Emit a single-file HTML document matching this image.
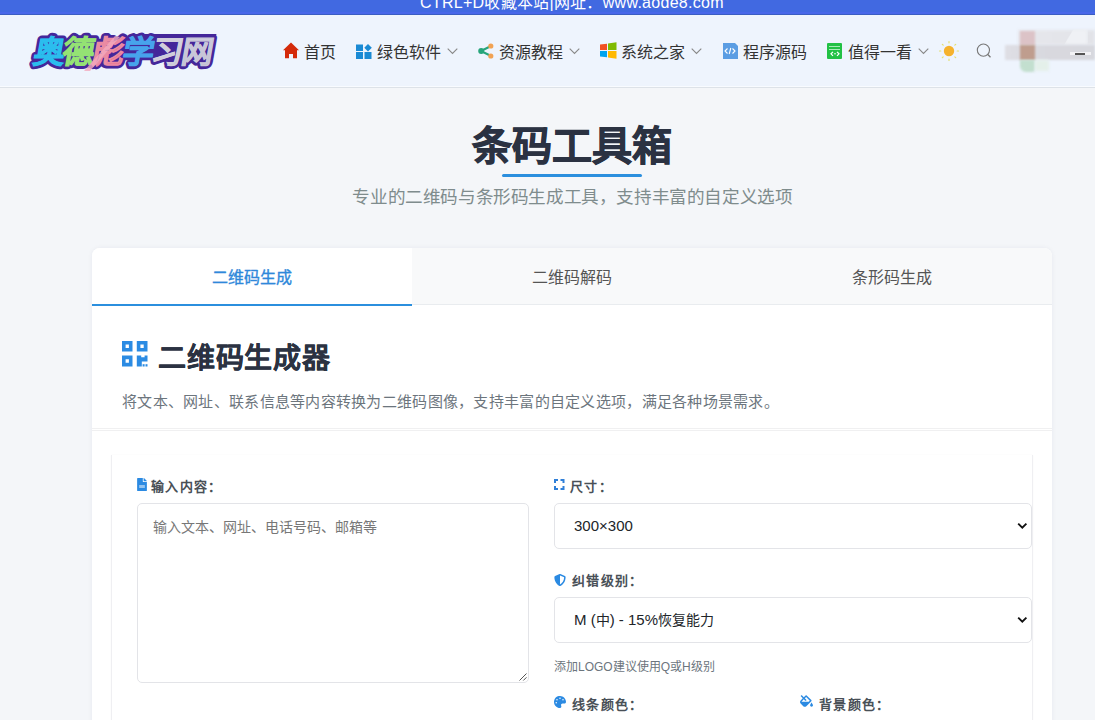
<!DOCTYPE html>
<html lang="zh-CN">
<head>
<meta charset="utf-8">
<title>条码工具箱</title>
<style>
*{margin:0;padding:0;box-sizing:border-box}
html,body{width:1095px;height:720px;overflow:hidden}
body{font-family:"Liberation Sans",sans-serif;background:#f4f6f9;position:relative;color:#333}
.abs{position:absolute}
#topbar{left:0;top:0;width:1095px;height:15px;background:linear-gradient(#4169e1 0,#4169e1 12px,#4867e9 12px,#4867e9 14px,#3a5dc2 14px);overflow:hidden}
#topbar span{position:absolute;left:420px;top:-7px;font-size:16px;letter-spacing:0.28px;color:#fff;white-space:nowrap;line-height:20px}
#header{left:0;top:15px;width:1095px;height:73px;background:#eef4fd;border-bottom:1px solid #dde2e8;box-shadow:inset 0 -1px 0 #f8fbff}
.nav{position:absolute;top:1px;height:73px;font-size:16px;color:#333;line-height:73px;white-space:nowrap}
.nav svg{position:absolute}
#title{left:0;width:1144px;top:120px;text-align:center;font-size:40px;font-weight:bold;color:#2b3242;line-height:52px;-webkit-text-stroke:0.9px #2b3242}
#uline{left:502px;top:174px;width:140px;height:3px;border-radius:2px;background:#2b8fde}
#sub{left:0;width:1145px;top:185px;text-align:center;font-size:17.6px;letter-spacing:-0.4px;color:#7f8c8d;line-height:24px}
#card{left:92px;top:248px;width:960px;height:480px;background:#fff;border-radius:8px 8px 0 0;box-shadow:0 0 5px rgba(30,40,80,.06)}
#tabs{left:0;top:0;width:960px;height:57px;background:#f8f9fa;border-bottom:1px solid #e9ecef;border-radius:8px 8px 0 0}
.tab{position:absolute;top:0;width:320px;height:57px;line-height:60px;text-align:center;font-size:16px;color:#555}
.tab.act{background:#fff;color:#2f88da;-webkit-text-stroke:0.35px #2f88da;border-bottom:2px solid #2b8fde;border-radius:8px 0 0 0;height:58px}

#sec{left:0;top:57px;width:960px;height:126px;border-bottom:3px double #f0f0f1}
#sech{left:66px;top:34px;letter-spacing:0.8px;font-size:28px;font-weight:bold;color:#2b3242;line-height:40px;-webkit-text-stroke:0.25px #2b3242;white-space:nowrap}
#secd{left:30px;top:85px;letter-spacing:0.28px;font-size:15px;color:#6c757d;line-height:24px;white-space:nowrap}
#panel{left:19px;top:207px;width:922px;height:300px;border-left:1px solid #efeff2;border-right:1px solid #efeff2;box-shadow:0 0 2px rgba(0,0,0,.03)}
.lbl{position:absolute;font-size:13px;letter-spacing:1.3px;font-weight:bold;color:#495057;line-height:20px;white-space:nowrap}
.lbl svg{position:absolute}
#ta{left:45px;top:255px;width:392px;height:180px;border:1px solid #e3e4e8;border-radius:5px;background:#fff}
#ph{left:61px;top:269px;font-size:14px;color:#777;line-height:20px;white-space:nowrap}
.sel{position:absolute;left:462px;width:478px;height:46px;border:1px solid #e3e4e8;border-radius:5px;background:#fff}
.sel span{position:absolute;left:19px;top:0px;line-height:44px;font-size:15px;color:#212529;white-space:nowrap}
.sel svg{position:absolute;left:462px;top:18px}
#hint{left:462px;top:410px;font-size:12px;color:#6c757d;line-height:18px;white-space:nowrap}
.sel i{font-style:normal;font-size:14px}
</style>
</head>
<body>
<div id="topbar" class="abs"><span>CTRL+D收藏本站|网址：www.aode8.com</span></div>
<div id="header" class="abs">
  <svg class="abs" style="left:20px;top:10px" width="205" height="60" viewBox="0 0 205 60">
    <defs>
      <linearGradient id="gd" x1="0" y1="0" x2="0" y2="1"><stop offset="0" stop-color="#86e060"/><stop offset="1" stop-color="#b5ec96"/></linearGradient>
      <linearGradient id="gb" x1="0" y1="0" x2="1" y2="0"><stop offset="0.45" stop-color="#eea2b4"/><stop offset="0.6" stop-color="#e24866"/></linearGradient>
      <linearGradient id="gs" x1="0" y1="0" x2="0" y2="1"><stop offset="0" stop-color="#e4e2ec"/><stop offset="1" stop-color="#b9b5c9"/></linearGradient>
      <linearGradient id="gs2" x1="0" y1="0" x2="0" y2="1"><stop offset="0" stop-color="#e0deea"/><stop offset="1" stop-color="#b4b0c6"/></linearGradient>
    </defs>
    <g font-family="Liberation Sans,sans-serif" font-weight="bold" font-size="31.5" transform="skewX(-10)">
      <path d="M112 9 L198 9 L198 35 L112 35 Z" fill="#43269a"/>
      <g fill="#45279a" stroke="#45279a" stroke-width="6.5" stroke-linejoin="round"><text x="18.5" y="38.5">奥</text><text x="48.1" y="38.5">德</text><text x="77.7" y="38.5">彪</text><text x="107.3" y="38.5">学</text><text x="136.9" y="38.5">习</text><text x="166.5" y="38.5">网</text></g>
      <g stroke-width="0.8" stroke-linejoin="miter"><text x="18.5" y="38.5" fill="#2bbdee" stroke="#2bbdee">奥</text><text x="48.1" y="38.5" fill="url(#gd)" stroke="#94e274">德</text><text x="77.7" y="38.5" fill="url(#gb)" stroke="#ea8aa2">彪</text><text x="107.3" y="38.5" fill="#47a3ec" stroke="#47a3ec">学</text><text x="136.9" y="38.5" fill="url(#gs)" stroke="#d0cedc">习</text><text x="166.5" y="38.5" fill="url(#gs2)" stroke="#c8c6d8">网</text></g>
    </g>
    <path d="M64 46 L95 11 L100 12 L70 46 Z" fill="#f2aabe" opacity="0.8"/>
  </svg>
  <!-- home -->
  <svg class="abs" style="left:283px;top:27px" width="16" height="17" viewBox="0 0 16 17"><path d="M8 0.5 L0 8.3 L2 8.3 L2 16.3 L6 16.3 L6 12 L10 12 L10 16.3 L14 16.3 L14 8.3 L16 8.3 Z" fill="#d42a0a"/></svg>
  <div class="nav" style="left:304px">首页</div>
  <!-- grid -->
  <svg class="abs" style="left:356px;top:29px" width="16" height="15" viewBox="0 0 16 15"><rect x="0" y="0.5" width="7" height="6.5" fill="#1a8ad4"/><rect x="0" y="8" width="7" height="7" fill="#1a8ad4"/><rect x="8.5" y="8" width="7" height="7" fill="#1a8ad4"/><path d="M12 0 L15.8 3.7 L12 7.4 L8.3 3.7 Z" fill="#1a8ad4"/></svg>
  <div class="nav" style="left:377px">绿色软件</div>
  <svg class="abs chev" style="left:447px;top:33px" width="11" height="7" viewBox="0 0 11 7"><path d="M0.7 0.7 L5.5 5.5 L10.3 0.7" fill="none" stroke="#888" stroke-width="1.1"/></svg>
  <!-- share -->
  <svg class="abs" style="left:478px;top:28px" width="16" height="16" viewBox="0 0 16 16"><path d="M3 8 L13 3 M3 8 L13 13" stroke="#27a57b" stroke-width="2"/><circle cx="3.2" cy="8" r="3" fill="#27a57b"/><circle cx="12.8" cy="3" r="2.6" fill="#f1a253"/><circle cx="12.8" cy="13" r="2.6" fill="#f1a253"/></svg>
  <div class="nav" style="left:499px">资源教程</div>
  <svg class="abs chev" style="left:569px;top:33px" width="11" height="7" viewBox="0 0 11 7"><path d="M0.7 0.7 L5.5 5.5 L10.3 0.7" fill="none" stroke="#888" stroke-width="1.1"/></svg>
  <!-- windows -->
  <svg class="abs" style="left:600px;top:27px" width="17" height="17" viewBox="0 0 17 17"><path d="M0 2.6 L7 1.8 L7 8 L0 8 Z" fill="#f25022"/><path d="M8 1.6 L16.5 0.3 L16.5 8 L8 8 Z" fill="#7fba00"/><path d="M0 9 L7 9 L7 15.2 L0 14.4 Z" fill="#00a4ef"/><path d="M8 9 L16.5 9 L16.5 16.7 L8 15.4 Z" fill="#ffb900"/></svg>
  <div class="nav" style="left:621px">系统之家</div>
  <svg class="abs chev" style="left:691px;top:33px" width="11" height="7" viewBox="0 0 11 7"><path d="M0.7 0.7 L5.5 5.5 L10.3 0.7" fill="none" stroke="#888" stroke-width="1.1"/></svg>
  <!-- code -->
  <svg class="abs" style="left:722px;top:28px" width="16" height="16" viewBox="0 0 16 16"><path d="M1 0 L13 0 L16 3 L16 16 L1 16 Z" fill="#5b9de3"/><path d="M5.5 5.5 L3 8 L5.5 10.5 M10.5 5.5 L13 8 L10.5 10.5 M8.8 5 L7.2 11" stroke="#fff" stroke-width="1.1" fill="none"/></svg>
  <div class="nav" style="left:743px">程序源码</div>
  <!-- green -->
  <svg class="abs" style="left:827px;top:28px" width="16" height="16" viewBox="0 0 16 16"><rect x="0" y="0" width="15" height="16" rx="1" fill="#22c145"/><path d="M2 3.5 H13 M2 6.5 H13" stroke="#b8f0c5" stroke-width="0.9"/><path d="M6 8.8 L4 10.8 L6 12.8 M10 8.8 L12 10.8 L10 12.8" stroke="#fff" stroke-width="1.2" fill="none"/><circle cx="8" cy="10.8" r="0.8" fill="#fff"/></svg>
  <div class="nav" style="left:848px">值得一看</div>
  <svg class="abs chev" style="left:918px;top:33px" width="11" height="7" viewBox="0 0 11 7"><path d="M0.7 0.7 L5.5 5.5 L10.3 0.7" fill="none" stroke="#888" stroke-width="1.1"/></svg>
  <!-- sun -->
  <svg class="abs" style="left:938px;top:25px" width="22" height="22" viewBox="0 0 22 22"><circle cx="11" cy="11" r="5.2" fill="#f5b22c"/><g stroke="#e3e070" stroke-width="1.2" stroke-linecap="round"><path d="M11 1.5 V2.8 M11 19.2 V20.5 M1.5 11 H2.8 M19.2 11 H20.5 M4.3 4.3 L5.2 5.2 M16.8 16.8 L17.7 17.7 M4.3 17.7 L5.2 16.8 M16.8 5.2 L17.7 4.3"/></g></svg>
  <!-- search -->
  <svg class="abs" style="left:975px;top:27px" width="18" height="18" viewBox="0 0 18 18"><circle cx="8.4" cy="8.1" r="6.1" fill="none" stroke="#777" stroke-width="1.1"/><path d="M12.8 12.5 L15.5 15.2" stroke="#777" stroke-width="1.3"/></svg>
  <!-- blurred avatar -->
  <div class="abs" style="left:1018px;top:15px;width:77px;height:15px;background:linear-gradient(90deg,#e6e7ec,#e2e3e8);filter:blur(1.5px)"></div>
  <div class="abs" style="left:1064px;top:14px;width:24px;height:16px;background:#eff1f5;filter:blur(2px);clip-path:polygon(40% 0,100% 0,100% 100%,0 100%)"></div>
  <div class="abs" style="left:1005px;top:30px;width:90px;height:15px;background:linear-gradient(90deg,#dfdfe5,#d9d9df 30%,#d7d8de);filter:blur(1px)"></div>
  <div class="abs" style="left:1020px;top:16px;width:15px;height:14px;background:#dcc3c7;filter:blur(1px)"></div>
  <div class="abs" style="left:1020px;top:30px;width:15px;height:15px;background:#bf9d8e;filter:blur(1px)"></div>
  <div class="abs" style="left:1020px;top:45px;width:15px;height:12px;background:#c3dfcf;filter:blur(1px);border-radius:0 0 3px 6px"></div>
  <div class="abs" style="left:1035px;top:45px;width:14px;height:11px;background:#e4f0ea;filter:blur(1.5px)"></div>
  <div class="abs" style="left:1070px;top:37px;width:21px;height:3px;background:#f2f2f5;filter:blur(0.6px)"></div>
  <div class="abs" style="left:1075px;top:38px;width:10px;height:2px;background:#555;filter:blur(0.5px)"></div>
</div>
<div id="title" class="abs">条码工具箱</div>
<div id="uline" class="abs"></div>
<div id="sub" class="abs">专业的二维码与条形码生成工具，支持丰富的自定义选项</div>
<div id="card" class="abs">
  <div id="tabs" class="abs">
    <div class="tab act" style="left:0">二维码生成</div>
    <div class="tab" style="left:320px">二维码解码</div>
    <div class="tab" style="left:640px">条形码生成</div>
  </div>
  <div id="sec" class="abs">
    <svg class="abs" style="left:30px;top:36px" width="26" height="26" viewBox="0 0 26 26"><g fill="#2b8be3" fill-rule="evenodd"><path d="M0 0H10.5V10.5H0Z M3.6 3.6V6.9H6.9V3.6Z"/><path d="M14.8 0H25.5V10.5H14.8Z M18.4 3.6V6.9H21.7V3.6Z"/><path d="M0 14.6H10.5V25.5H0Z M3.6 18.2V21.7H6.9V18.2Z"/><path d="M14.8 14.6H19.2V16.2H22.6V14.6H25.5V20.6H19.8V25.5H14.8Z"/><rect x="20.6" y="23.2" width="2" height="2.3"/><rect x="23.5" y="23.2" width="2" height="2.3"/></g></svg>
    <div id="sech" class="abs">二维码生成器</div>
    <div id="secd" class="abs">将文本、网址、联系信息等内容转换为二维码图像，支持丰富的自定义选项，满足各种场景需求。</div>
  </div>
  <div id="panel" class="abs"></div>
  <div class="lbl" style="left:59px;top:229px">
    <svg style="left:-14px;top:1px" width="10" height="13" viewBox="0 0 384 512"><path fill="#2b8ae2" d="M224 136V0H24C10.7 0 0 10.7 0 24v464c0 13.3 10.7 24 24 24h336c13.3 0 24-10.7 24-24V160H248c-13.2 0-24-10.8-24-24zm160-14.1v6.1H256V0h6.1c6.4 0 12.5 2.5 17 7l97.9 98c4.5 4.5 7 10.6 7 16.9zM80 300h224v24H80zm0 48h224v24H80z"/></svg>
    输入内容：</div>
  <div id="ta" class="abs"><svg style="position:absolute;right:0px;bottom:0px" width="10" height="10" viewBox="0 0 10 10"><path d="M8.5 1.5 L1.5 8.5 M8.5 5.3 L5.3 8.5" stroke="#555" stroke-width="1"/></svg></div>
  <div id="ph" class="abs">输入文本、网址、电话号码、邮箱等</div>
  <div class="lbl" style="left:478px;top:229px">
    <svg style="left:-16px;top:2px" width="11" height="11" viewBox="0 0 11 11"><path d="M1 4V1H4M6.5 1H9.5V4M9.5 7V10H6.5M4 10H1V7" fill="none" stroke="#2f7fd8" stroke-width="2"/></svg>
    尺寸：</div>
  <div class="sel" style="top:255px"><span>300×300</span><svg width="11" height="8" viewBox="0 0 11 8"><path d="M1.2 1.6 L5.3 5.6 L9.4 1.6" fill="none" stroke="#111" stroke-width="1.9"/></svg></div>
  <div class="lbl" style="left:480px;top:323px">
    <svg style="left:-18px;top:3px" width="12" height="12" viewBox="0 0 512 512"><path fill="#2b8ae2" d="M466.5 83.7l-192-80a48.15 48.15 0 0 0-36.9 0l-192 80C27.7 91.1 16 108.6 16 128c0 198.5 114.5 335.7 221.5 380.3 11.8 4.9 25.1 4.9 36.9 0C360.1 472.6 496 349.3 496 128c0-19.4-11.7-36.9-29.5-44.3zM256.1 446.3l-.1-381 175.9 73.3c-3.3 151.4-82.1 261.1-175.8 307.7z"/></svg>
    纠错级别：</div>
  <div class="sel" style="top:349px"><span>M (<i>中</i>) - 15%<i>恢复能力</i></span><svg width="11" height="8" viewBox="0 0 11 8"><path d="M1.2 1.6 L5.3 5.6 L9.4 1.6" fill="none" stroke="#111" stroke-width="1.9"/></svg></div>
  <div id="hint" class="abs">添加LOGO建议使用Q或H级别</div>
  <div class="lbl" style="left:480px;top:447px">
    <svg style="left:-18px;top:1px" width="12" height="12" viewBox="0 0 512 512"><path fill="#2b8ae2" d="M204.3 5C104.9 24.4 24.8 104.3 5.2 203.4c-37 187 131.7 326.4 258.8 306.7 41.2-6.4 61.4-54.6 42.5-91.7-23.1-45.4 9.9-98.4 60.9-98.4h79.7c35.8 0 64.8-29.6 64.9-65.3C511.5 97.1 368.1-26.9 204.3 5zM96 320c-17.7 0-32-14.3-32-32s14.3-32 32-32 32 14.3 32 32-14.3 32-32 32zm32-128c-17.7 0-32-14.3-32-32s14.3-32 32-32 32 14.3 32 32-14.3 32-32 32zm128-64c-17.7 0-32-14.3-32-32s14.3-32 32-32 32 14.3 32 32-14.3 32-32 32zm128 64c-17.7 0-32-14.3-32-32s14.3-32 32-32 32 14.3 32 32-14.3 32-32 32z"/></svg>
    线条颜色：</div>
  <div class="lbl" style="left:727px;top:447px">
    <svg style="left:-19px;top:0px" width="13" height="12" viewBox="0 0 576 512"><path fill="#2b8ae2" d="M512 320s-64 92.65-64 128c0 35.35 28.66 64 64 64s64-28.65 64-64-64-128-64-128zm-9.37-102.94L294.94 9.37C288.69 3.12 280.5 0 272.31 0s-16.38 3.12-22.62 9.37l-81.58 81.58L81.93 4.76c-6.25-6.25-16.38-6.25-22.62 0L36.69 27.38c-6.24 6.25-6.24 16.38 0 22.62l86.19 86.18-94.76 94.76c-37.49 37.48-37.49 98.26 0 135.75l117.19 117.19c18.74 18.74 43.31 28.12 67.87 28.12 24.57 0 49.13-9.37 67.87-28.12l221.57-221.57c12.5-12.5 12.5-32.75.01-45.25zm-116.22 70.97H65.93c1.36-3.84 3.57-7.98 7.43-11.83l13.15-13.15 81.61-81.61 58.6 58.6c12.49 12.49 32.75 12.49 45.24 0s12.49-32.75 0-45.24l-58.6-58.6 58.95-58.95 162.44 162.44-48.34 48.34z"/></svg>
    背景颜色：</div>
</div>
</body>
</html>
